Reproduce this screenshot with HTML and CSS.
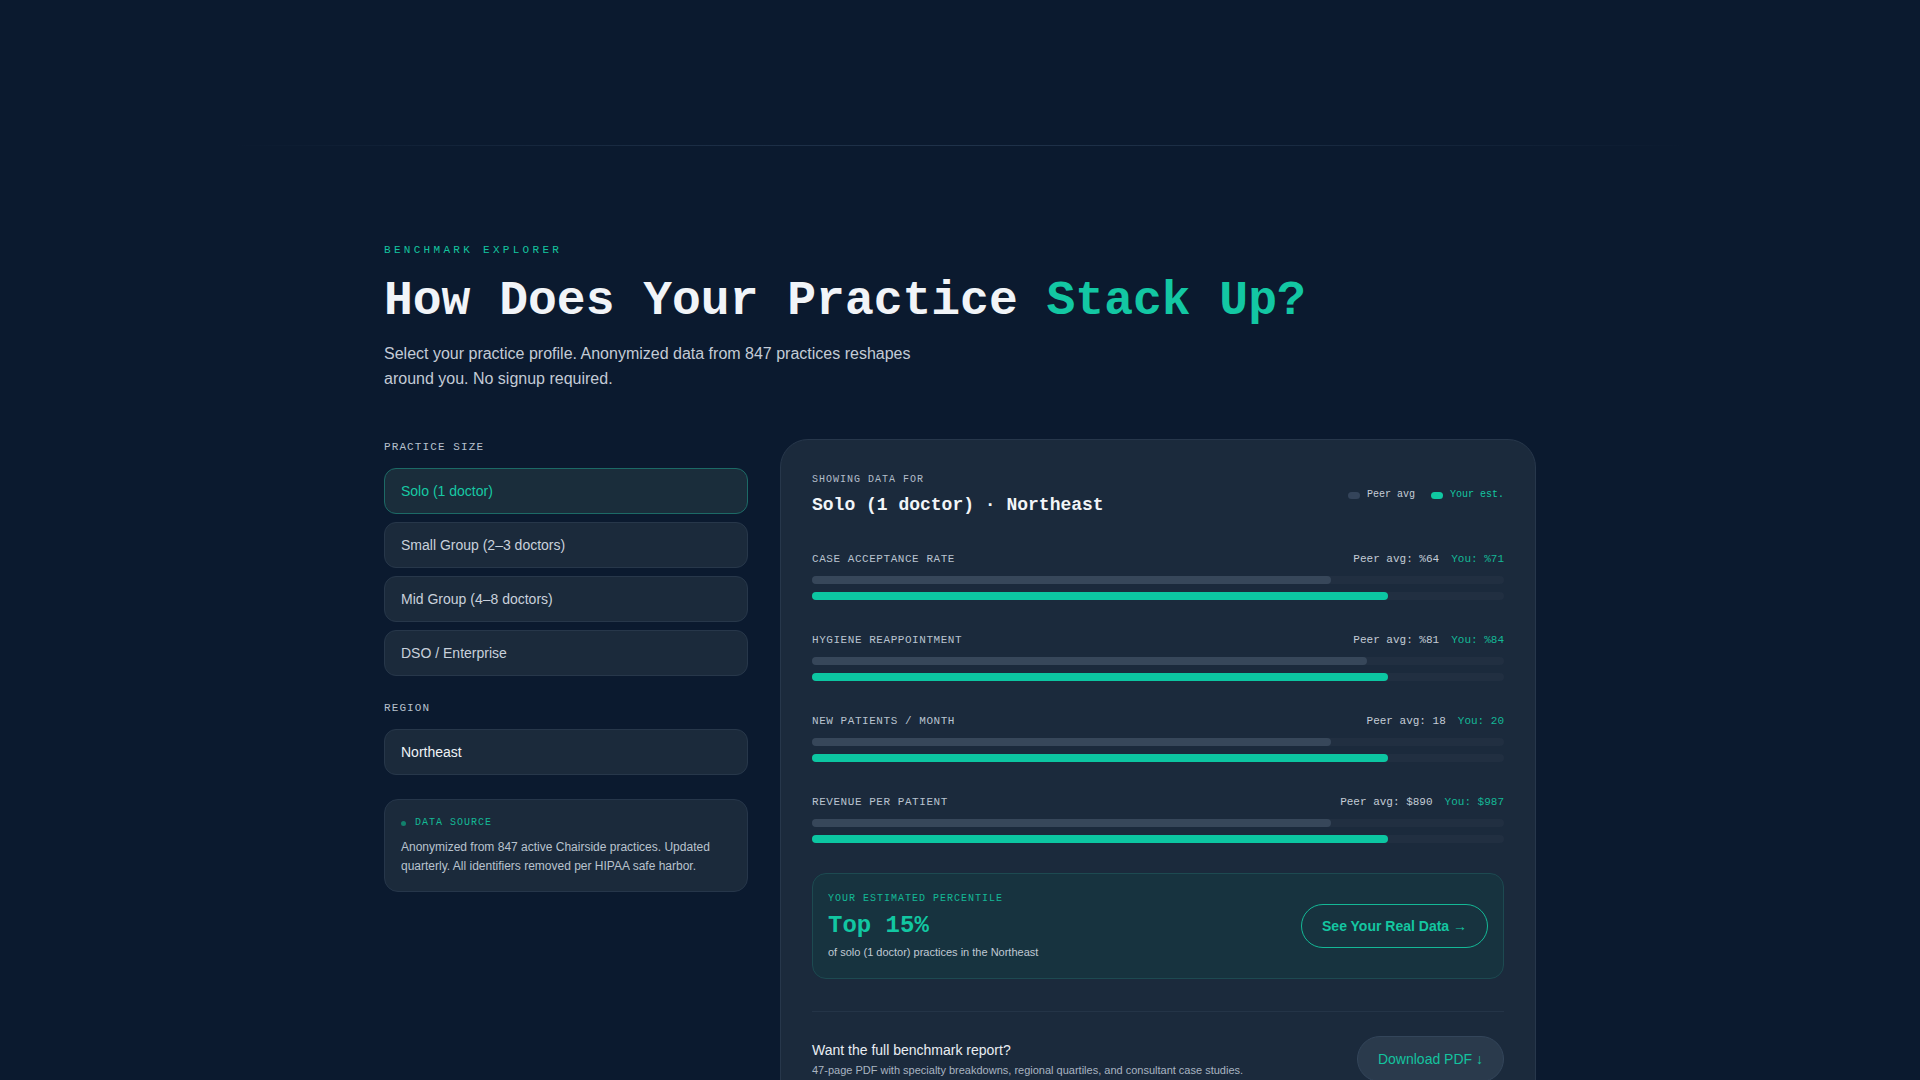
FILE: index.html
```html
<!DOCTYPE html>
<html lang="en">
<head>
<meta charset="utf-8">
<title>Benchmark Explorer</title>
<link rel="stylesheet" href="styles.css">
</head>
<body>
<div class="topbar"></div>
<div class="topline"></div>
<main class="wrap">
  <section class="hero">
    <p class="eyebrow">BENCHMARK EXPLORER</p>
    <h1>How Does Your Practice <span class="accent">Stack Up?</span></h1>
    <p class="lede">Select your practice profile. Anonymized data from 847 practices reshapes around you. No signup required.</p>
  </section>

  <div class="grid">
    <aside class="controls">
      <div class="group">
        <p class="field-label">PRACTICE SIZE</p>
        <div class="options">
          <div class="opt active">Solo (1 doctor)</div>
          <div class="opt">Small Group (2–3 doctors)</div>
          <div class="opt">Mid Group (4–8 doctors)</div>
          <div class="opt">DSO / Enterprise</div>
        </div>
      </div>
      <div class="group">
        <p class="field-label">REGION</p>
        <div class="options">
          <div class="opt select">Northeast</div>
        </div>
      </div>
      <div class="note">
        <div class="note-title"><span class="dot"></span>DATA SOURCE</div>
        <p>Anonymized from 847 active Chairside practices. Updated quarterly. All identifiers removed per HIPAA safe harbor.</p>
      </div>
    </aside>

    <section class="card">
      <div class="card-head">
        <div>
          <p class="kicker">SHOWING DATA FOR</p>
          <h2 class="card-title">Solo (1 doctor) · Northeast</h2>
        </div>
        <div class="legend">
          <span class="legend-item"><span class="sw"></span>Peer avg</span>
          <span class="legend-item you"><span class="sw you"></span>Your est.</span>
        </div>
      </div>

      <div class="metric">
        <div class="metric-head">
          <span class="metric-name">CASE ACCEPTANCE RATE</span>
          <span class="metric-vals"><span>Peer avg: %64</span><span class="you">You: %71</span></span>
        </div>
        <div class="track"><div class="fill" style="width:75%"></div></div>
        <div class="track"><div class="fill you" style="width:83.3%"></div></div>
      </div>

      <div class="metric">
        <div class="metric-head">
          <span class="metric-name">HYGIENE REAPPOINTMENT</span>
          <span class="metric-vals"><span>Peer avg: %81</span><span class="you">You: %84</span></span>
        </div>
        <div class="track"><div class="fill" style="width:80.2%"></div></div>
        <div class="track"><div class="fill you" style="width:83.3%"></div></div>
      </div>

      <div class="metric">
        <div class="metric-head">
          <span class="metric-name">NEW PATIENTS / MONTH</span>
          <span class="metric-vals"><span>Peer avg: 18</span><span class="you">You: 20</span></span>
        </div>
        <div class="track"><div class="fill" style="width:75%"></div></div>
        <div class="track"><div class="fill you" style="width:83.3%"></div></div>
      </div>

      <div class="metric">
        <div class="metric-head">
          <span class="metric-name">REVENUE PER PATIENT</span>
          <span class="metric-vals"><span>Peer avg: $890</span><span class="you">You: $987</span></span>
        </div>
        <div class="track"><div class="fill" style="width:75%"></div></div>
        <div class="track"><div class="fill you" style="width:83.3%"></div></div>
      </div>

      <div class="pct">
        <div>
          <p class="pct-label">YOUR ESTIMATED PERCENTILE</p>
          <p class="pct-value">Top 15%</p>
          <p class="pct-sub">of solo (1 doctor) practices in the Northeast</p>
        </div>
        <button class="btn-outline">See Your Real Data →</button>
      </div>

      <div class="foot">
        <div>
          <p class="foot-title">Want the full benchmark report?</p>
          <p class="foot-sub">47-page PDF with specialty breakdowns, regional quartiles, and consultant case studies.</p>
        </div>
        <button class="btn-ghost">Download PDF ↓</button>
      </div>
    </section>
  </div>
</main>
</body>
</html>
```

FILE: styles.css
```css
* { box-sizing: border-box; }

body {
  margin: 0;
  background: #0b1a2f;
  color: #e6ebf1;
  font-family: "Liberation Sans", Arial, sans-serif;
}

p { margin: 0; }

.topbar { height: 145px; }
.topline {
  height: 1px;
  background: linear-gradient(90deg, rgba(40,60,85,0) 12%, rgba(40,60,85,0.55) 35%, rgba(40,60,85,0.7) 50%, rgba(40,60,85,0.55) 65%, rgba(40,60,85,0) 88%);
}

.wrap {
  width: 1152px;
  margin: 0 auto;
  padding-top: 96px;
}

.eyebrow {
  font-family: "Liberation Mono", monospace;
  font-size: 11px;
  line-height: 16px;
  letter-spacing: 0.3em;
  color: #14c49f;
}

h1 {
  margin: 15px 0 0;
  font-family: "Liberation Mono", monospace;
  font-weight: 700;
  font-size: 48px;
  line-height: 56px;
  color: #f1f4f8;
}
h1 .accent { color: #13c7a3; }

.lede {
  margin-top: 13px;
  max-width: 560px;
  font-size: 16px;
  line-height: 24.5px;
  color: #c3cbd6;
}

.grid {
  display: grid;
  grid-template-columns: 364px 1fr;
  gap: 32px;
  margin-top: 48px;
  align-items: start;
}

.field-label {
  font-family: "Liberation Mono", monospace;
  font-size: 11px;
  line-height: 16px;
  letter-spacing: 0.1em;
  color: #b7c1cd;
  margin-bottom: 13px;
}

.group + .group { margin-top: 24px; }

.options {
  display: flex;
  flex-direction: column;
  gap: 8px;
}

.opt {
  height: 46px;
  padding: 0 16px;
  display: flex;
  align-items: center;
  background: #1b2a3b;
  border: 1px solid #27374a;
  border-radius: 12px;
  font-size: 14px;
  color: #c9d1db;
}
.opt.active {
  color: #17c9a4;
  border-color: #1c6a66;
  background: #1a2d3b;
}
.opt.select { color: #eef2f6; }

.note {
  margin-top: 24px;
  padding: 16px;
  border-radius: 14px;
  background: #1b2a3b;
  border: 1px solid #26364a;
}
.note-title {
  display: flex;
  align-items: center;
  gap: 9px;
  font-family: "Liberation Mono", monospace;
  font-size: 10px;
  line-height: 14px;
  letter-spacing: 0.1em;
  color: #14b896;
}
.note-title .dot {
  width: 5px;
  height: 5px;
  border-radius: 50%;
  background: #12806c;
}
.note p {
  margin-top: 8px;
  font-size: 12px;
  line-height: 18.5px;
  color: #b9c3ce;
}

.card {
  background: #1b2a3c;
  border: 1px solid #27374b;
  border-radius: 28px;
  padding: 33px 31px 32px;
}

.card-head {
  display: flex;
  justify-content: space-between;
  align-items: center;
  margin-bottom: 35px;
}
.kicker {
  font-family: "Liberation Mono", monospace;
  font-size: 10px;
  line-height: 14px;
  letter-spacing: 0.1em;
  color: #b3bdca;
  margin-bottom: 6px;
}
.card-title {
  margin: 0;
  font-family: "Liberation Mono", monospace;
  font-weight: 700;
  font-size: 18px;
  line-height: 24px;
  color: #f2f5f8;
}

.legend {
  display: flex;
  align-items: center;
  gap: 16px;
  font-family: "Liberation Mono", monospace;
  font-size: 10px;
  line-height: 14px;
}
.legend-item {
  display: flex;
  align-items: center;
  gap: 7px;
  color: #c5cdd7;
}
.legend-item.you { color: #14c6a1; }
.sw {
  width: 12px;
  height: 7px;
  border-radius: 4px;
  background: #34445a;
}
.sw.you { background: #10c8a2; }

.metric + .metric { margin-top: 33px; }
.metric-head {
  display: flex;
  justify-content: space-between;
  align-items: center;
  height: 15px;
  margin-bottom: 9px;
}
.metric-name {
  font-family: "Liberation Mono", monospace;
  font-size: 11px;
  line-height: 15px;
  letter-spacing: 0.05em;
  color: #b9c3cf;
}
.metric-vals {
  display: flex;
  gap: 12px;
  font-family: "Liberation Mono", monospace;
  font-size: 11px;
  line-height: 15px;
  color: #c4ccd6;
}
.metric-vals .you { color: #14b896; }

.track {
  height: 8px;
  border-radius: 4px;
  background: #212f41;
}
.track + .track { margin-top: 8px; }
.fill {
  height: 100%;
  border-radius: 4px;
  background: #37475a;
}
.fill.you { background: #0cc6a2; }

.pct {
  margin-top: 30px;
  display: flex;
  justify-content: space-between;
  align-items: center;
  padding: 17.5px 15px 17.5px;
  border: 1px solid #1d4a51;
  background: #17333f;
  border-radius: 14px;
}
.pct-label {
  font-family: "Liberation Mono", monospace;
  font-size: 10px;
  line-height: 14px;
  letter-spacing: 0.1em;
  color: #14b896;
}
.pct-value {
  margin-top: 5px;
  font-family: "Liberation Mono", monospace;
  font-weight: 700;
  font-size: 24px;
  line-height: 30px;
  color: #12c7a2;
}
.pct-sub {
  margin-top: 3.5px;
  font-size: 11px;
  line-height: 16px;
  color: #c0c9d3;
}

.btn-outline {
  border: 1.5px solid #14b896;
  border-radius: 999px;
  padding: 11px 20px;
  background: transparent;
  font-family: "Liberation Sans", Arial, sans-serif;
  font-weight: 700;
  font-size: 14px;
  line-height: 20px;
  color: #14c6a1;
}

.foot {
  margin-top: 32px;
  border-top: 1px solid #243447;
  padding-top: 24px;
  display: flex;
  justify-content: space-between;
  align-items: center;
}
.foot-title {
  font-size: 14px;
  line-height: 20px;
  color: #e9eef3;
}
.foot-sub {
  margin-top: 2px;
  font-size: 11px;
  line-height: 16px;
  color: #a9b4c1;
}
.btn-ghost {
  background: #2a3a4c;
  border: 1px solid #33455a;
  border-radius: 999px;
  padding: 12px 20px;
  font-family: "Liberation Sans", Arial, sans-serif;
  font-size: 14px;
  line-height: 20px;
  color: #14c39f;
}
```
